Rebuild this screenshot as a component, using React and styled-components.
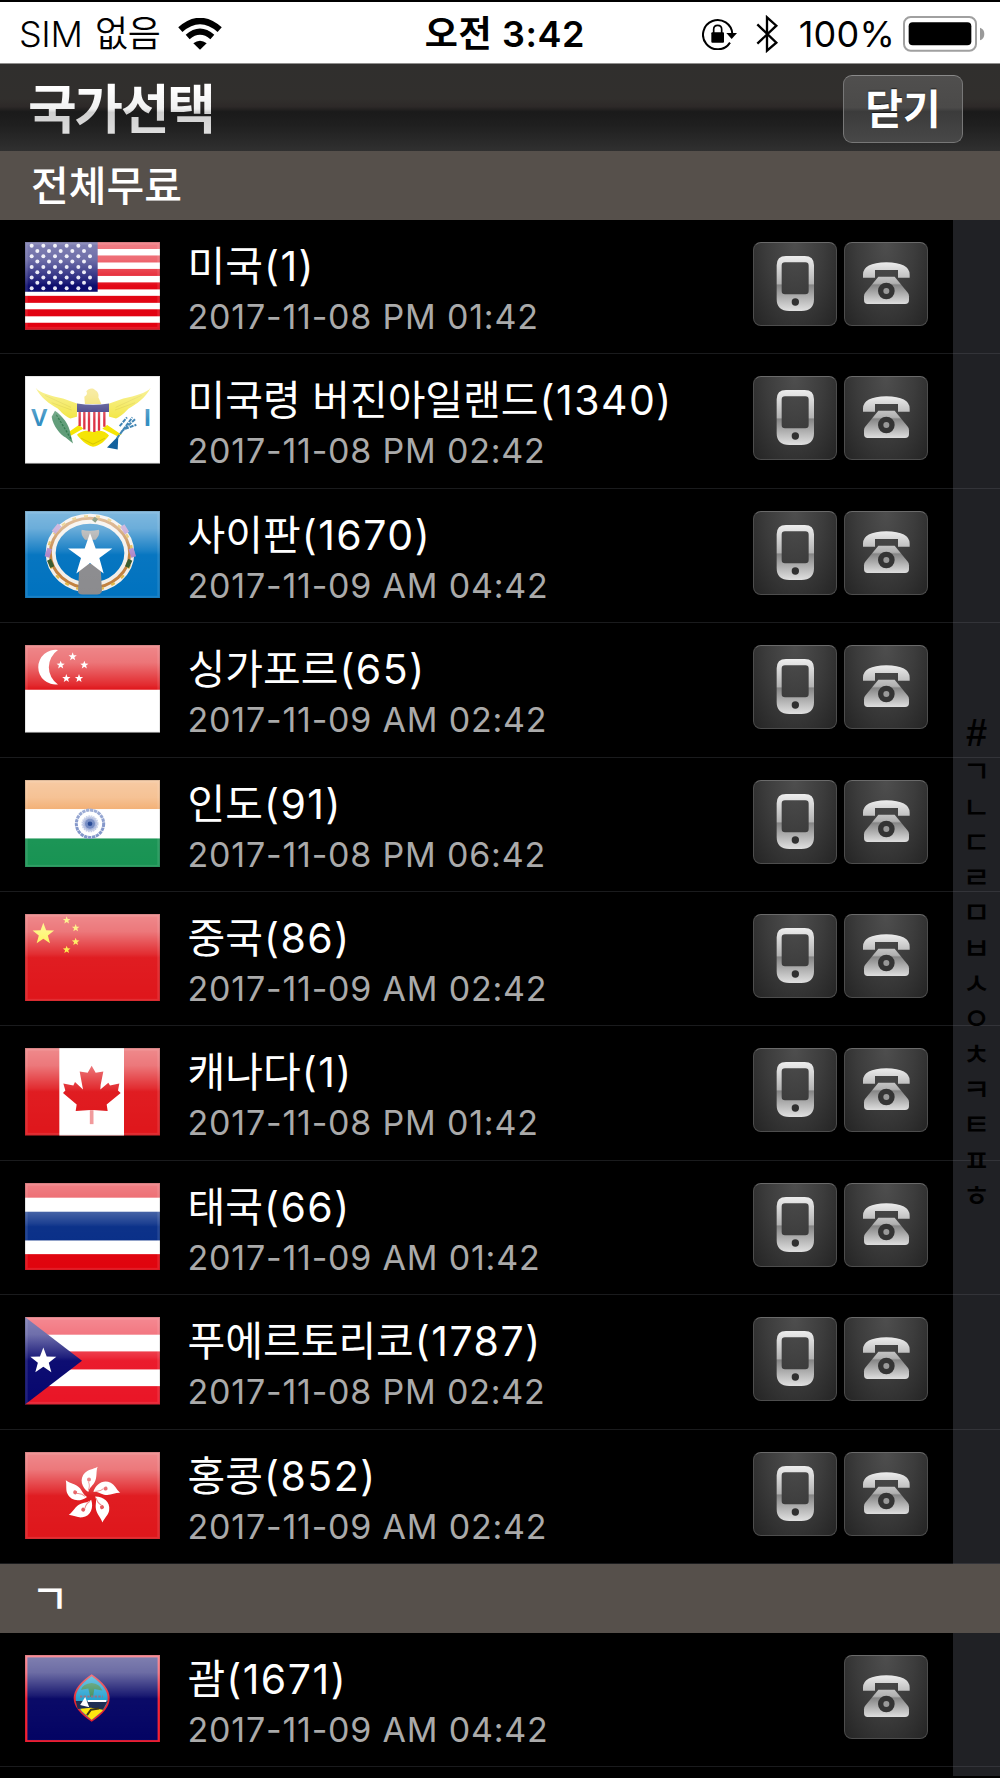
import styled, { createGlobalStyle } from 'styled-components';

const GlobalStyle = createGlobalStyle`
  * {
    box-sizing: border-box;
  }

  body {
    margin: 0;
    background: #000;
    font-family: Inter, 'Noto Sans CJK KR', sans-serif;
  }
`;

const Screen = styled.div`
  width: 1000px;
  height: 1778px;
  overflow: hidden;
  background: #000;
  color: #fff;
`;

const StatusBar = styled.div`
  display: grid;
  grid-template-columns: 1fr auto 1fr;
  align-items: center;
  height: 64px;
  padding: 2px 15px 0 19px;
  border-top: 2px solid #000;
  border-bottom: 1px solid #8f8e8d;
  background: #fff;
  color: #000;
  font-size: 36px;
  line-height: 60px;
  white-space: nowrap;
`;

const StatusGroup = styled.div`
  display: flex;
  align-items: center;
  justify-content: ${({ $end }) => ($end ? 'flex-end' : 'flex-start')};

  svg {
    display: block;
    flex: none;
  }
`;

const Carrier = styled.span`
  width: 159px;
  font-weight: 350;
  letter-spacing: -0.4px;
  word-spacing: 3px;
`;

const Clock = styled.span`
  margin-left: 6px;
  font-weight: 600;
  letter-spacing: 0.6px;
`;

const Percent = styled.span`
  margin: 0 8px 0 20px;
  letter-spacing: 0.2px;
`;

const Header = styled.header`
  display: flex;
  align-items: center;
  justify-content: space-between;
  height: 87px;
  padding: 2px 37px 0 28px;
  background: linear-gradient(
    #302f2d 0%,
    #312f2d 40%,
    #2d2928 49%,
    #1a1a1a 55%,
    #1f1f1f 70%,
    #303030 100%
  );
`;

const Title = styled.h1`
  margin: 0;
  padding-top: 2px;
  font-size: 53px;
  font-weight: 700;
  line-height: 82px;
  letter-spacing: -2.4px;
  background: linear-gradient(#fff 25%, #f0f0f0 50%, #cfcfcf 54%, #dedede 80%);
  background-clip: text;
  color: transparent;
`;

const CloseButton = styled.button`
  width: 120px;
  height: 68px;
  margin-top: 1px;
  padding: 0;
  border: 1px solid #777;
  border-top-color: #8a8a8a;
  border-radius: 9px;
  background: linear-gradient(#504f4e 0%, #4b4a49 48%, #3b3b3b 54%, #484848 100%);
  color: #fff;
  font-family: inherit;
  font-size: 41px;
  font-weight: 600;
  line-height: 65px;
  text-shadow: 0 -1px 1px rgba(0, 0, 0, 0.6);
`;

const SectionHeader = styled.h2`
  height: 69px;
  margin: 0;
  padding-left: 31px;
  background: #56504b;
  font-size: 41px;
  font-weight: 500;
  line-height: 70px;
`;

/* the right 47px is the strip the index letters sit on */
const List = styled.div`
  position: relative;
  height: 1556px;
  background: linear-gradient(to right, #000 953px, #202125 953px);
`;

const Row = styled.div`
  display: flex;
  align-items: flex-start;
  height: 134.4px;
  padding: 22px 72px 0 25px;
  border-bottom: 1px solid rgba(120, 122, 130, 0.22);
`;

const Info = styled.div`
  flex: 1;
  margin: -1px 0 0 27.5px;
  white-space: nowrap;
`;

const Name = styled.div`
  height: 50px;
  font-size: 41px;
  line-height: 50px;
`;

const DialCode = styled.span`
  margin-left: 1px;
  letter-spacing: 1.5px;
`;

const Time = styled.div`
  height: 48px;
  color: #aaa;
  font-size: 34px;
  font-weight: 400;
  line-height: 52px;
  letter-spacing: 0.8px;
`;

const Actions = styled.div`
  display: flex;
  gap: 7px;
`;

const CallButton = styled.button`
  width: 84px;
  height: 84px;
  padding: 0;
  border: 1px solid #4d4d4d;
  border-top-color: #6a6a6a;
  border-radius: 8px;
  background: radial-gradient(ellipse at 50% 0%, #4e4e4e 0%, #3c3c3c 50%, #242424 100%);

  svg {
    display: block;
    margin: -1px;
  }
`;

const IndexBar = styled.div`
  position: absolute;
  top: 496px;
  right: 0;
  display: flex;
  flex-direction: column;
  align-items: center;
  width: 47px;
  color: #000;
  font-family: 'Liberation Sans', 'Noto Sans CJK KR', sans-serif;
  font-size: 30px;
  font-weight: 500;
  line-height: 35.3px;
`;

const HashMark = styled.span`
  margin-bottom: 3px;
  font-size: 38px;
  font-weight: 700;
`;

const FlagSvg = styled.svg`
  display: block;
  flex: none;
  width: 135px;
  height: 87.5px;
`;

const starPoints = (cx, cy, r) =>
  Array.from({ length: 10 }, (_, i) => {
    const radius = i % 2 ? r * 0.42 : r;
    const angle = (Math.PI / 5) * i - Math.PI / 2;
    return `${cx + radius * Math.cos(angle)},${cy + radius * Math.sin(angle)}`;
  }).join(' ');

const Star = ({ cx, cy, r, fill = '#fff' }) => (
  <polygon points={starPoints(cx, cy, r)} fill={fill} />
);

const UsArt = () => (
  <>
    <rect width="405" height="262" fill="#fff" />
    {[0, 1, 2, 3, 4, 5, 6].map((i) => (
      <rect key={i} y={i * 40.3} width="405" height="21" fill="#e2000f" />
    ))}
    <rect width="218" height="149" fill="#06066a" />
    {Array.from({ length: 9 }, (_, row) =>
      Array.from({ length: row % 2 ? 5 : 6 }, (_, col) => (
        <circle
          key={`${row}-${col}`}
          cx={(row % 2 ? 37 : 20) + col * 35}
          cy={11 + row * 15.9}
          r="6"
          fill="#e6e6f4"
        />
      ))
    )}
  </>
);

const VirginIslandsArt = () => (
  <>
    <rect width="405" height="262" fill="#fff" />
    <path
      d="M32 35c12 16 45 24 82 32l44 16v38l-22 6c-18-8-28-20-38-30-24-14-50-30-66-62z"
      fill="#f2e53a"
    />
    <path
      d="M377 35c-12 16-45 24-82 32l-44 16v38l22 6c18-8 28-20 38-30 24-14 50-30 66-62z"
      fill="#f2e53a"
    />
    <path d="M60 58l78 36M80 80l60 22M350 58l-78 36M330 80l-60 22" stroke="#d9c92c" strokeWidth="2" />
    <path d="M178 62c8-4 10-10 6-16 6-8 18-12 26-4 10 6 12 14 10 22l10 22h-50z" fill="#f2dc5a" />
    <path d="M168 142l-52 36 16 4 42-24zM240 142l50 34-14 4-44-22z" fill="#f6e500" />
    <path d="M156 176c14-14 28-12 48-12s34-2 48 14c-12 16-26 30-48 34-22-6-36-20-48-36z" fill="#f5e400" />
    <path d="M168 186l36 18 36-18" fill="none" stroke="#d6c400" strokeWidth="3" />
    <path d="M156 84h96v46c0 20-22 30-48 38-26-8-48-18-48-38z" fill="#fff" />
    <path d="M164 106v44M178 106v54M192 106v60M208 106v62M222 106v58M238 106v46" stroke="#dc2f42" strokeWidth="7" />
    <path d="M156 82q48 8 96 0v26h-96z" fill="#32307c" />
    <path d="M90 104c22 14 44 44 46 68l8 30-22-18c-16-8-38-34-42-62z" fill="#5e9b77" />
    <path d="M94 116l44 72" stroke="#2e7b4c" strokeWidth="4" strokeDasharray="7 4" />
    <path d="M280 180l-34 34 32 6z" fill="#0f5f9c" />
    <path d="M276 186l46-62M288 168l44-40M284 150l22-26M300 158l34-12" stroke="#3d83b3" strokeWidth="6" strokeDasharray="12 3" />
    <text x="18" y="149" fontFamily="Liberation Sans" fontWeight="700" fontSize="74" fill="#2f8cc0">
      V
    </text>
    <text x="357" y="149" fontFamily="Liberation Sans" fontWeight="700" fontSize="74" fill="#2f8cc0">
      I
    </text>
  </>
);

const SaipanArt = () => (
  <>
    <rect width="405" height="262" fill="#0072bf" />
    <ellipse cx="195" cy="126" rx="118" ry="103" fill="none" stroke="#f3eee8" strokeWidth="30" />
    <ellipse cx="195" cy="126" rx="119" ry="104" fill="none" stroke="#c1803f" strokeWidth="9" />
    <ellipse
      cx="195"
      cy="126"
      rx="126"
      ry="111"
      fill="none"
      stroke="#e0b848"
      strokeWidth="7"
      strokeDasharray="12 24"
    />
    <path d="M74 112l-8 26M104 42l-18 22M318 112l8 26M292 44l14 22" stroke="#ae85c8" strokeWidth="15" />
    <path d="M72 146l10 22M316 146l-10 22M205 22l10 8" stroke="#35582b" strokeWidth="13" />
    <path d="M170 56q24 6 52 0q4 14-10 30h-32q-14-16-10-30z" fill="#9a9a9a" />
    <path d="M163 168q32-20 64 0l4 74q-6 10-18 8h-36q-16 2-18-8z" fill="#8b8b8e" />
    <path
      d="M195 66l17 46h50l-39 29 13 46-41-31-41 31 14-46-39-29h50z"
      fill="#fff"
    />
  </>
);

const SingaporeArt = () => (
  <>
    <rect width="405" height="262" fill="#fff" />
    <rect width="405" height="134" fill="#df1217" />
    <path d="M99 15a52 52 0 1 0 0 103a62 62 0 0 1 0-103z" fill="#fff" />
    <Star cx={143} cy={35} r={13} />
    <Star cx={107} cy={60} r={13} />
    <Star cx={178} cy={60} r={13} />
    <Star cx={124} cy={100} r={13} />
    <Star cx={162} cy={100} r={13} />
  </>
);

const IndiaArt = () => (
  <>
    <rect width="405" height="262" fill="#fff" />
    <rect width="405" height="87" fill="#ef9648" />
    <rect y="175" width="405" height="87" fill="#189353" />
    <circle cx="195" cy="131" r="41" fill="none" stroke="#8195c9" strokeWidth="9" strokeDasharray="10 2" />
    <circle cx="195" cy="131" r="22" fill="#aab7dc" stroke="#c3cce6" strokeWidth="7" strokeDasharray="5 2" />
    <circle cx="195" cy="131" r="15" fill="#7088c0" />
    <circle cx="195" cy="131" r="7" fill="#234693" />
  </>
);

const ChinaArt = () => (
  <>
    <rect width="405" height="262" fill="#df161b" />
    <Star cx={55} cy={60} r={34} fill="#fdf22f" />
    <Star cx={125} cy={19} r={12} fill="#fde72f" />
    <Star cx={152} cy={42} r={12} fill="#fde72f" />
    <Star cx={152} cy={83} r={12} fill="#fde72f" />
    <Star cx={125} cy={107} r={12} fill="#fde72f" />
  </>
);

const CanadaArt = () => (
  <>
    <rect width="405" height="262" fill="#df161b" />
    <rect x="103" width="194" height="262" fill="#fff" />
    <path
      d="M200 53l12 21 23-4-8 40-1 14 24-20 5 8 28-6-4 21 8 8-42 34 3 20-44-3h-8l-44 3 3-20-41-34 7-8-6-21 30 6 5-10 24 22-10-54 24 4z"
      fill="#df161b"
    />
    <path d="M200 186v42" stroke="#f1999b" strokeWidth="11" />
  </>
);

const ThailandArt = () => (
  <>
    <rect width="405" height="262" fill="#e0030d" />
    <rect y="44" width="405" height="169" fill="#fff" />
    <rect y="86" width="405" height="86" fill="#052c86" />
  </>
);

const PuertoRicoArt = () => (
  <>
    <rect width="405" height="262" fill="#ea1526" />
    <rect y="53" width="405" height="50" fill="#fff" />
    <rect y="157" width="405" height="50" fill="#fff" />
    <path d="M0 0l171 131L0 262z" fill="#06066e" />
    <Star cx={55} cy={132} r={41} />
  </>
);

const HongKongArt = () => (
  <>
    <rect width="405" height="262" fill="#df161b" />
    {[0, 72, 144, 216, 288].map((angle) => (
      <g key={angle} transform={`translate(198 130) rotate(${angle})`}>
        <path d="M-8-10C-28-24-36-50-18-68C-8-78 6-78 20-86C14-72 20-54 10-38C2-26-6-22-8-10z" fill="#fff" />
        <circle cx="-6" cy="-48" r="6" fill="#e4575b" />
        <path d="M-8-42q6 14 0 26" fill="none" stroke="#ee8a8c" strokeWidth="3" />
      </g>
    ))}
  </>
);

const GuamArt = () => (
  <>
    <rect width="405" height="262" fill="#f3061b" />
    <rect x="7" y="7" width="391" height="248" fill="#030363" />
    <path d="M200 58q108 72 0 142q-108-70 0-142z" fill="#e8222b" />
    <path d="M200 64q96 66 0 130q-96-64 0-130z" fill="#20a0d0" />
    <path d="M158 144h84l-10 24-32 26-30-26z" fill="#ffe60a" />
    <path d="M152 138h96l-14 26-36-6-40 4z" fill="#18294f" />
    <path d="M200 84q-26 2-32 20l22-4 6 26h8l4-24 24 4q-8-20-32-22z" fill="#378a57" />
    <path d="M165 124h68" stroke="#8e6878" strokeWidth="6" strokeDasharray="7 4" />
    <path d="M170 148l10-16 8 20zM188 138h56" fill="#fff" stroke="#fff" strokeWidth="6" />
    <path d="M186 180l12-16 24-4" fill="none" stroke="#3a3410" strokeWidth="6" />
  </>
);

const countries = [
  { name: '미국', code: '(1)', time: '2017-11-08 PM 01:42', Art: UsArt, mobile: true },
  { name: '미국령 버진아일랜드', code: '(1340)', time: '2017-11-08 PM 02:42', Art: VirginIslandsArt, mobile: true },
  { name: '사이판', code: '(1670)', time: '2017-11-09 AM 04:42', Art: SaipanArt, mobile: true },
  { name: '싱가포르', code: '(65)', time: '2017-11-09 AM 02:42', Art: SingaporeArt, mobile: true },
  { name: '인도', code: '(91)', time: '2017-11-08 PM 06:42', Art: IndiaArt, mobile: true },
  { name: '중국', code: '(86)', time: '2017-11-09 AM 02:42', Art: ChinaArt, mobile: true },
  { name: '캐나다', code: '(1)', time: '2017-11-08 PM 01:42', Art: CanadaArt, mobile: true },
  { name: '태국', code: '(66)', time: '2017-11-09 AM 01:42', Art: ThailandArt, mobile: true },
  { name: '푸에르토리코', code: '(1787)', time: '2017-11-08 PM 02:42', Art: PuertoRicoArt, mobile: true },
  { name: '홍콩', code: '(852)', time: '2017-11-09 AM 02:42', Art: HongKongArt, mobile: true },
];

const giyeokCountries = [
  { name: '괌', code: '(1671)', time: '2017-11-09 AM 04:42', Art: GuamArt, mobile: false },
];

const indexLetters = ['ㄱ', 'ㄴ', 'ㄷ', 'ㄹ', 'ㅁ', 'ㅂ', 'ㅅ', 'ㅇ', 'ㅊ', 'ㅋ', 'ㅌ', 'ㅍ', 'ㅎ'];

const HiddenSvg = styled.svg`
  display: block;
  width: 0;
  height: 0;
`;

/* gradients shared by every flag and button */
const Gradients = () => (
  <HiddenSvg>
    <defs>
      <linearGradient id="gloss" x1="0" y1="0" x2="0" y2="1">
        <stop offset="0" stopColor="#fff" stopOpacity="0.5" />
        <stop offset="0.2" stopColor="#fff" stopOpacity="0.42" />
        <stop offset="0.46" stopColor="#fff" stopOpacity="0.1" />
        <stop offset="0.5" stopColor="#fff" stopOpacity="0.03" />
        <stop offset="1" stopColor="#fff" stopOpacity="0" />
      </linearGradient>
      <linearGradient id="metalMobile" gradientUnits="userSpaceOnUse" x1="0" y1="42" x2="0" y2="207">
        <stop offset="0" stopColor="#ededed" />
        <stop offset="0.5" stopColor="#b4b4b4" />
        <stop offset="0.53" stopColor="#858585" />
        <stop offset="1" stopColor="#e0e0e0" />
      </linearGradient>
      <linearGradient id="metalPhone" gradientUnits="userSpaceOnUse" x1="0" y1="62" x2="0" y2="186">
        <stop offset="0" stopColor="#ebebeb" />
        <stop offset="0.5" stopColor="#b0b0b0" />
        <stop offset="0.54" stopColor="#858585" />
        <stop offset="1" stopColor="#dedede" />
      </linearGradient>
    </defs>
  </HiddenSvg>
);

const Flag = ({ Art }) => (
  <FlagSvg viewBox="0 0 405 262" preserveAspectRatio="none">
    <Art />
    <rect width="405" height="262" fill="url(#gloss)" />
    <rect x="4" y="4" width="397" height="254" fill="none" stroke="#fff" strokeOpacity="0.1" strokeWidth="8" />
    <rect x="1" y="1" width="403" height="260" fill="none" stroke="#000" strokeOpacity="0.12" strokeWidth="3" />
  </FlagSvg>
);

const MobileIcon = () => (
  <svg width="84" height="84" viewBox="0 0 252 252">
    <path
      fillRule="evenodd"
      fill="url(#metalMobile)"
      d="M99 42h56q28 0 28 28v102q0 35-38 35h-36q-38 0-38-35V70q0-28 28-28zM96 61q-10 0-10 10v76q0 10 10 10h61q10 0 10-10V71q0-10-10-10z"
    />
    <circle cx="127" cy="180" r="11" fill="#303030" />
  </svg>
);

const PhoneIcon = () => (
  <svg width="84" height="84" viewBox="0 0 252 252">
    <path
      fill="url(#metalPhone)"
      d="M57 107V98Q57 62 127 61Q197 62 197 98V107H162V84H93V107Z"
    />
    <path
      fill="url(#metalPhone)"
      d="M103 104H152L192 153Q195 157 195 163V174Q195 186 183 186H71Q60 186 60 174V163Q60 157 63 153Z"
    />
    <circle cx="127" cy="147" r="17" fill="#999" stroke="#343434" strokeWidth="16" />
  </svg>
);

const WifiIcon = () => (
  <svg width="44" height="32" viewBox="0 0 132 96">
    <path d="M7 35Q66-17 125 35" fill="none" stroke="#000" strokeWidth="19" />
    <path d="M29 57Q66 25 103 57" fill="none" stroke="#000" strokeWidth="18" />
    <path d="M46 76Q66 60 86 76L66 95z" />
  </svg>
);

const RotationLockIcon = () => (
  <svg width="35" height="32" viewBox="0 0 105 96">
    <path d="M84 74A44 44 0 1 1 91 48" fill="none" stroke="#000" strokeWidth="6" />
    <path d="M73 45h32L89 63z" />
    <rect x="28" y="43" width="38" height="31" rx="3" />
    <path d="M35 46V34q0-12 12-12t12 12v12" fill="none" stroke="#000" strokeWidth="5" />
  </svg>
);

const BluetoothIcon = () => (
  <svg width="23" height="38" viewBox="0 0 69 114">
    <path d="M4 28L61 83L33 107V7L61 32L4 86" fill="none" stroke="#000" strokeWidth="7" />
  </svg>
);

const BatteryIcon = () => (
  <svg width="82" height="36" viewBox="0 0 246 108">
    <rect x="3" y="3" width="216" height="101" rx="20" fill="none" stroke="#a0a0a0" strokeWidth="6" />
    <rect x="17" y="19" width="188" height="69" rx="12" />
    <path d="M231 35q13 4 13 19t-13 19z" fill="#9a9a9a" />
  </svg>
);

const Spacer = styled.span`
  width: 19px;
`;

const CountryRow = ({ name, code, time, Art, mobile }) => (
  <Row>
    <Flag Art={Art} />
    <Info>
      <Name>
        {name}
        <DialCode>{code}</DialCode>
      </Name>
      <Time>{time}</Time>
    </Info>
    <Actions>
      {mobile && (
        <CallButton>
          <MobileIcon />
        </CallButton>
      )}
      <CallButton>
        <PhoneIcon />
      </CallButton>
    </Actions>
  </Row>
);

const App = () => {
  return (
    <Screen>
      <GlobalStyle />
      <Gradients />
      <StatusBar>
        <StatusGroup>
          <Carrier>SIM 없음</Carrier>
          <WifiIcon />
        </StatusGroup>
        <Clock>오전 3:42</Clock>
        <StatusGroup $end>
          <RotationLockIcon />
          <Spacer />
          <BluetoothIcon />
          <Percent>100%</Percent>
          <BatteryIcon />
        </StatusGroup>
      </StatusBar>
      <Header>
        <Title>국가선택</Title>
        <CloseButton>닫기</CloseButton>
      </Header>
      <SectionHeader>전체무료</SectionHeader>
      <List>
        {countries.map((country) => (
          <CountryRow key={country.name} {...country} />
        ))}
        <SectionHeader>ㄱ</SectionHeader>
        {giyeokCountries.map((country) => (
          <CountryRow key={country.name} {...country} />
        ))}
        <IndexBar>
          <HashMark>#</HashMark>
          {indexLetters.map((letter) => (
            <span key={letter}>{letter}</span>
          ))}
        </IndexBar>
      </List>
    </Screen>
  );
};

export default App;
